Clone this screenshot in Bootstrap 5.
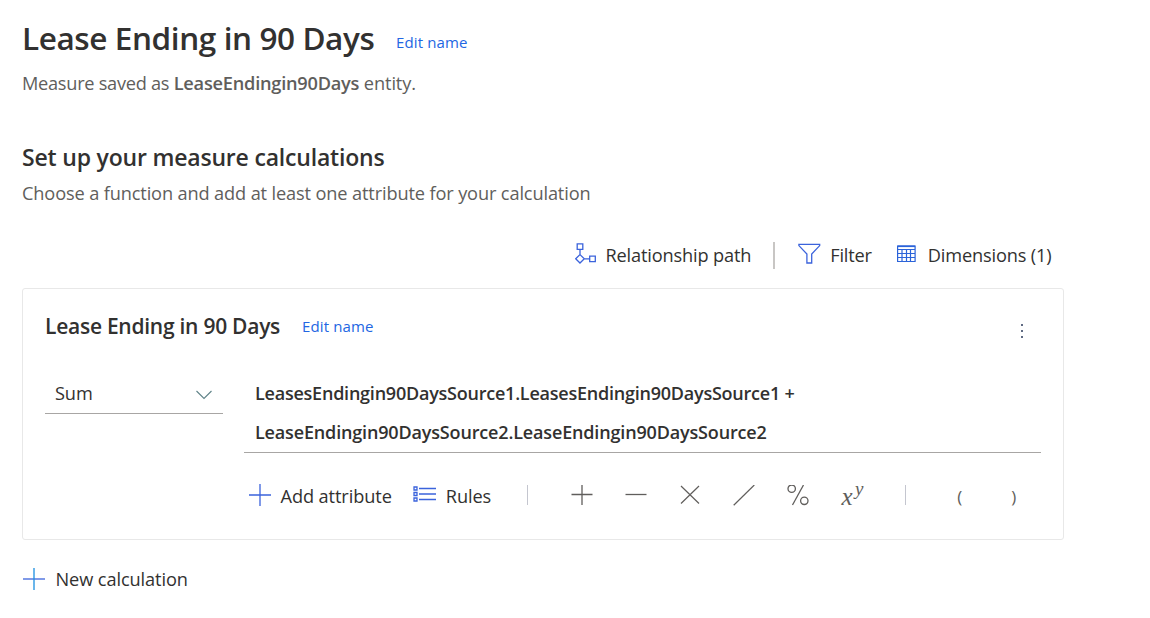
<!DOCTYPE html>
<html lang="en">
<head>
<meta charset="utf-8">
<meta name="viewport" content="width=device-width, initial-scale=1">
<title>Lease Ending in 90 Days</title>
<link href="https://cdn.jsdelivr.net/npm/bootstrap@5.3.0/dist/css/bootstrap.min.css" rel="stylesheet">
<style>
body{font-family:"Open Sans",sans-serif;font-size:18.2px;letter-spacing:-.1px;color:#323130;background:#fff;overflow:hidden}
.page-main{width:1042px;margin-left:22px}
.line-row{height:40px;line-height:40px;white-space:nowrap}
.muted{color:#605e5c}
h1,h2,h3{margin:0;font-weight:550;line-height:inherit}
h1{font-size:31.5px;letter-spacing:-.4px;width:353px}
h2{font-size:23px;letter-spacing:-.19px}
h3{font-size:21px;letter-spacing:-.26px;width:236px}
.edit-link{font-size:15px;letter-spacing:.13px;color:#2266e3;text-decoration:none}
.head-title{padding-top:18px;height:58px}
.head-sub{margin-top:5px}
.head-h2{margin-top:34px}
.head-sub2{margin-top:-4px;letter-spacing:-.135px}
.toolbar{margin-top:22px;padding-right:12.500px}
.divider-bar{width:2px;height:27px;background:#c8c6c4}
.calc-card{margin-top:13px;height:252px;border:1px solid #e8e8e8;border-radius:3px;padding:17px 22px 0}
.fn-select{width:178px;height:41px;border-bottom:1px solid #a8a6a4;padding:0 11px 0 10px}
.expr{width:797px;height:80px;border-bottom:1px solid #a8a6a4;padding-left:11px;font-weight:575;font-size:18px}
.expr div{height:39px;line-height:40px}
.tools{margin-top:23px;margin-left:199px}
.op{width:54px}
.thin-sep{width:1px;height:20px;background:#c4c6cf}
.new-calc{margin-top:19px}
svg{display:block;flex:none;fill:none}
.blue{stroke:#3b63dc}
.gray{stroke:#605e5c}
</style>
</head>
<body>
<main class="page-main">
  <header>
    <div class="line-row head-title d-flex">
      <h1>Lease Ending in 90 Days</h1>
      <a href="#" class="edit-link" style="margin:4px 0 0 21px">Edit name</a>
    </div>
    <div class="line-row head-sub muted"><span style="letter-spacing:-.27px">Measure saved as </span><b class="fw-semibold" style="letter-spacing:-.23px">LeaseEndingin90Days</b> entity.</div>
  </header>

  <section>
    <h2 class="line-row head-h2">Set up your measure calculations</h2>
    <div class="line-row head-sub2 muted">Choose a function and add at least one attribute for your calculation</div>

    <div class="line-row toolbar d-flex justify-content-end align-items-center">
      <svg class="blue" width="22" height="22" viewBox="0 0 22 22" stroke-width="1.3" style="margin:-3px 9px 0 0"><path d="M2.2 .8h5.6v5.6H2.2zM5 6.4V12M5 11.6l4.3 4.2L5 20 .7 15.800zM9.300 15.800h5.200M14.700 13.100h5.600v5.600h-5.600z"/></svg>
      <span style="letter-spacing:-.16px">Relationship path</span>
      <span class="divider-bar" style="margin:0 23px 0 22px"></span>
      <svg class="blue" width="23" height="22" viewBox="0 0 23 22" stroke-width="1.3" style="margin:-3px 9px 0 0"><path d="M.9 1.300h20.800v1.300L13.700 11v9h-4.800v-9L.9 2.600z"/></svg>
      <span style="letter-spacing:-.2px">Filter</span>
      <svg width="19" height="18" viewBox="0 0 19 18" style="margin:-2px 12px 0 25px" stroke="#2b63d9" stroke-width="1.200"><path d="M.6 1h17.500v15.500H.6zM.6 4.500h17.500M.6 8.500h17.500M.6 12.500h17.500M5 4.500v12M9.500 4.500v12M13.500 4.500v12"/><path d="M.6 1.300h17.500" stroke-width="1.600"/></svg>
      <span style="letter-spacing:-.15px">Dimensions (1)</span>
    </div>

    <div class="calc-card">
      <div class="line-row d-flex align-items-center justify-content-between">
        <div class="d-flex"><h3>Lease Ending in 90 Days</h3><a href="#" class="edit-link" style="margin-left:21px">Edit name</a></div>
        <svg width="2" height="16" viewBox="0 0 2 16" style="margin:9px 18px 0 0"><path d="M0 1h2v2H0zM0 7h2v2H0zM0 13h2v2H0z" fill="#5f6a82"/></svg>
      </div>
      <div class="d-flex justify-content-between" style="margin-top:27px">
        <div class="fn-select line-row d-flex justify-content-between align-items-center">
          <span>Sum</span>
          <svg width="16" height="10" viewBox="0 0 16 10" style="margin-top:3px" stroke="#5f8388" stroke-width="1.100"><path d="M.5 1 8 8.500 15.500 1"/></svg>
        </div>
        <div class="expr">
          <div style="letter-spacing:-.23px">LeasesEndingin90DaysSource1.LeasesEndingin90DaysSource1 +</div>
          <div style="letter-spacing:-.16px">LeaseEndingin90DaysSource2.LeaseEndingin90DaysSource2</div>
        </div>
      </div>
      <div class="line-row tools d-flex align-items-center">
        <svg class="blue" width="22" height="22" viewBox="0 0 22 22" stroke-width="1.300" style="margin:-2px 10px 0 4.500px"><path d="M0 11h22M11 0v22"/></svg>
        <span>Add attribute</span>
        <svg class="blue" width="23" height="16" viewBox="0 0 23 16" stroke-width="1.300" style="margin:-4px 10px 0 21px"><path d="M1 1h3v3H1zM1 6.500h3v3H1zM1 12h3v3H1zM6 2.500h17M6 8h17M6 13.500h17"/></svg>
        <span>Rules</span>
        <span class="thin-sep" style="margin:-2px 27px 0 35.700px"></span>
        <span class="op"><svg class="gray m-auto" width="22" height="22" viewBox="0 0 22 22" stroke-width="1.300"><path d="M.5 9.500h21M11 0v20"/></svg></span>
        <span class="op"><svg class="gray m-auto" width="22" height="22" viewBox="0 0 22 22" stroke-width="1.300"><path d="M.5 9.500h21"/></svg></span>
        <span class="op"><svg class="gray m-auto" width="22" height="22" viewBox="0 0 22 22" stroke-width="1.200"><path d="M2 1l18 17.500M20 1 2 18.500"/></svg></span>
        <span class="op"><svg class="gray m-auto" width="22" height="22" viewBox="0 0 22 22" stroke-width="1.200"><path d="M.7 20.300 21.300 0"/></svg></span>
        <span class="op"><svg class="gray m-auto" width="22" height="22" viewBox="0 0 22 22" stroke-width="1.300"><circle cx="4.700" cy="3.700" r="3.700"/><circle cx="17.300" cy="15.800" r="3.700"/><path d="M16.500 0 5.500 20"/></svg></span>
        <span class="op"><svg class="m-auto overflow-visible" width="22" height="22" viewBox="0 0 22 22" font-family="Liberation Serif,serif" font-style="italic" letter-spacing="0"><text x="0.500" y="20" font-size="25" fill="#605e5c">x</text><text x="14" y="9.500" font-size="19" fill="#605e5c">y</text></svg></span>
        <span class="thin-sep" style="margin:-2px 27px 0 26px"></span>
        <span class="op text-center muted" style="font-size:17px;padding-top:1px">(</span>
        <span class="op text-center muted" style="font-size:17px;padding-top:1px">)</span>
      </div>
    </div>

    <div class="line-row new-calc d-flex align-items-center">
      <svg class="blue" width="23" height="22" viewBox="0 0 23 22" stroke-width="1.300" style="margin:-1px 9.500px 0 1px"><path d="M0 11h22"/><path d="M11 0v22" stroke="#1b8fe0"/></svg>
      <span>New calculation</span>
    </div>
  </section>
</main>
<script src="https://cdn.jsdelivr.net/npm/bootstrap@5.3.0/dist/js/bootstrap.bundle.min.js"></script>
</body>
</html>
